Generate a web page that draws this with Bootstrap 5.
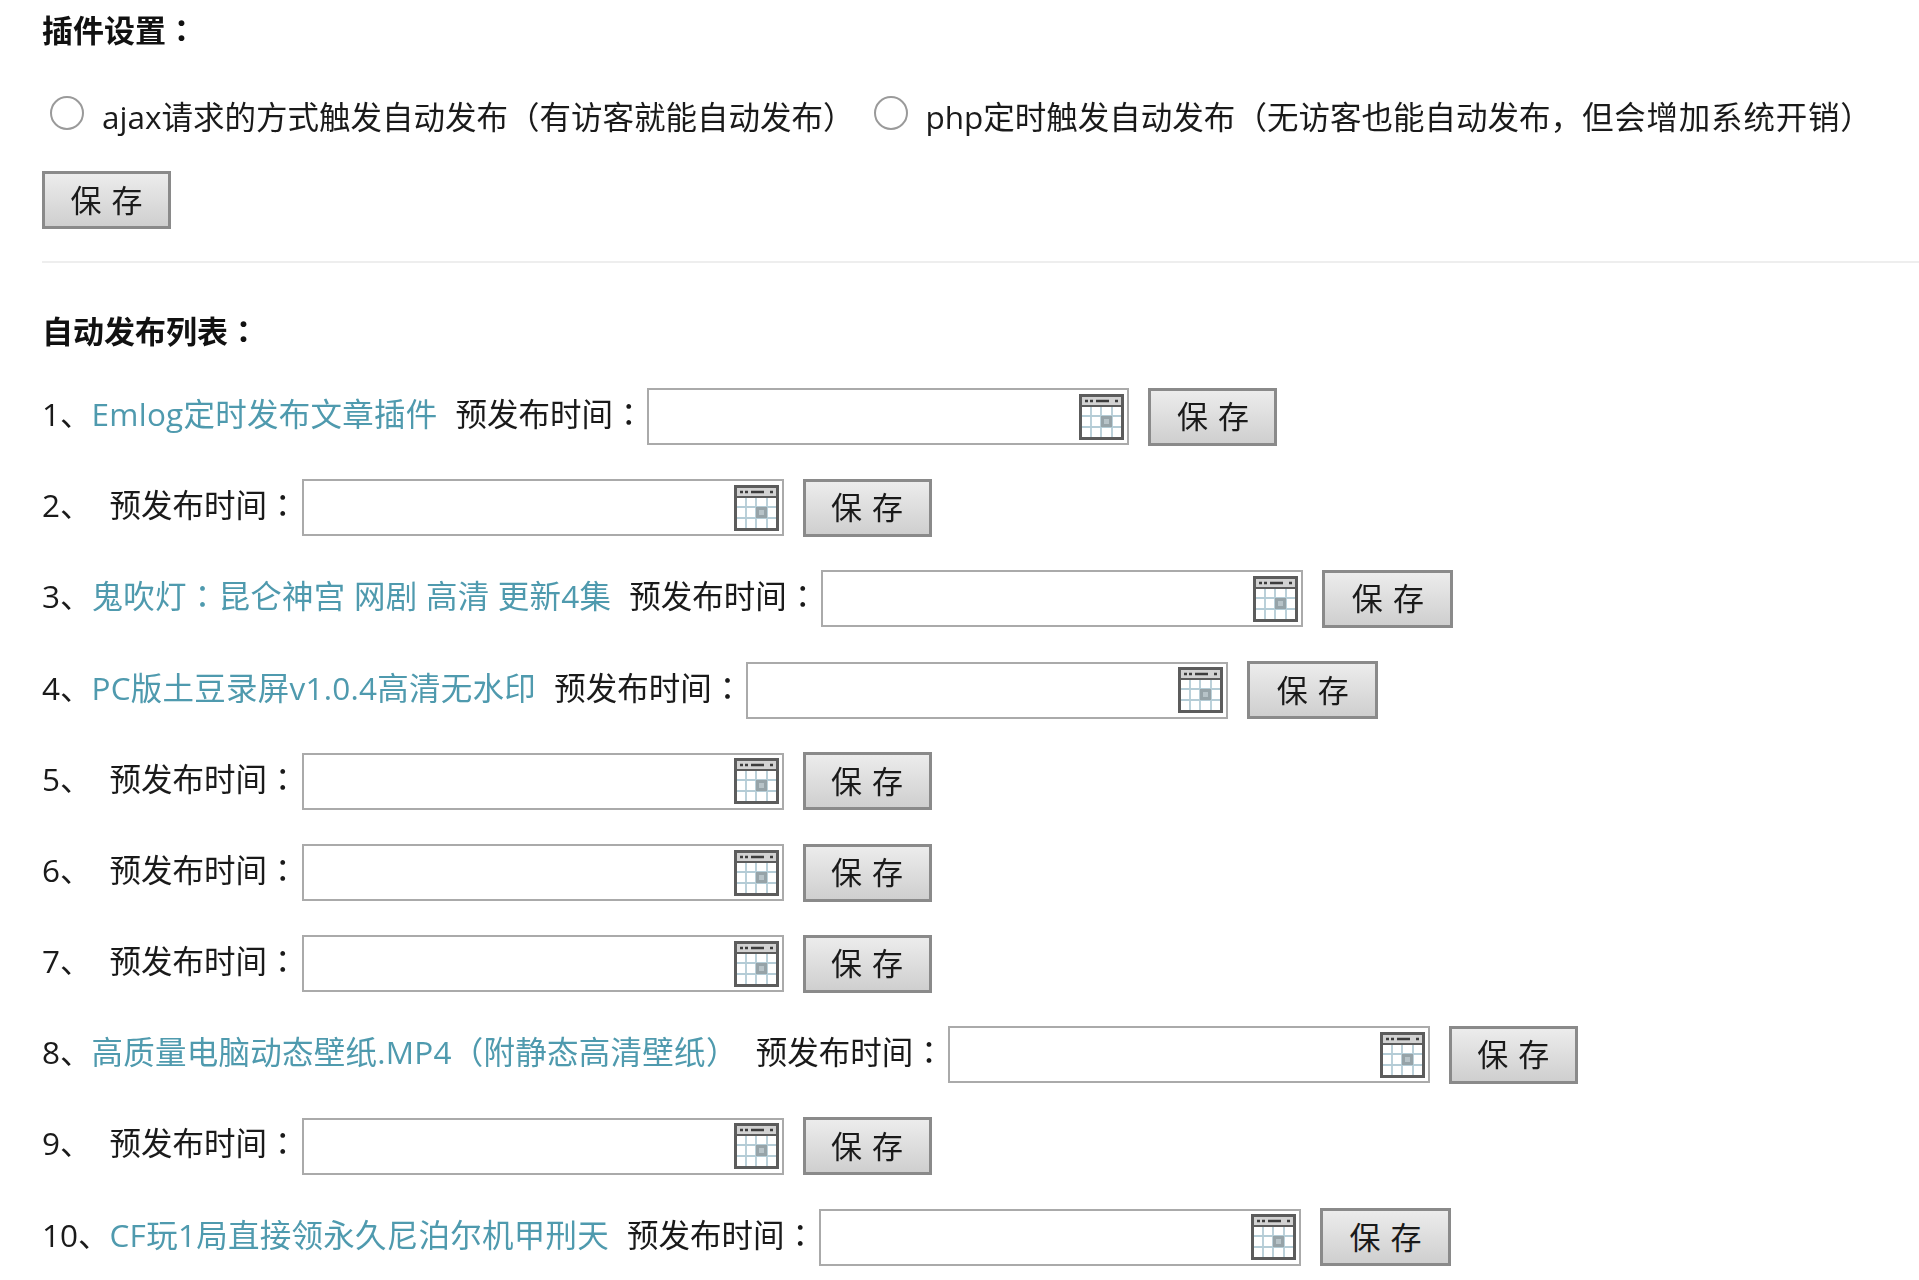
<!DOCTYPE html>
<html lang="zh-CN">
<head>
<meta charset="utf-8">
<title>插件设置</title>
<link rel="stylesheet" href="https://cdn.jsdelivr.net/npm/bootstrap@5.3.0/dist/css/bootstrap.min.css">
<style>
body{background:#fff;color:#1a1a1a;font-family:"Open Sans","Noto Sans CJK SC",sans-serif;font-size:31.5px;overflow:hidden}
.sheet{padding-left:42px;filter:blur(.6px)}
.pn{font-family:"Noto Sans CJK TC",sans-serif}
.sect-title{font-weight:700;font-size:31px;line-height:58px;height:62px;color:#111}
.sect-title.top{margin-bottom:3px}
.sect-title.list{margin-top:38px;margin-bottom:8px}
.radio-line{height:106px;white-space:nowrap}
.radio-line .form-check-input{width:34px;height:34px;margin:0;border:2px solid #9a9a9a;border-radius:50%;background-color:#fff;transform:translateY(-5px);flex:none}
.radio-line .opt-a{margin-left:8px}
.radio-line label{margin-left:18px;padding-bottom:3px}
.radio-line .opt-b{margin-left:19px}
.stretch-tail{letter-spacing:.8px}
.save-btn{width:129px;height:58px;padding:0;border:3px solid #8a8a8a;border-radius:0;background:linear-gradient(#ececec,#cfcfcf);color:#1a1a1a;font-size:31px;line-height:1;flex:none;word-spacing:2px}
.save-btn.wider{width:131px}
.rule{height:2px;background:#eee;margin-top:32px}
.pub-line{height:91.2px;white-space:nowrap}
.pub-line .txt{padding-bottom:7px}
.pub-num{display:inline-block}
.pub-line a{color:#4f9aae;text-decoration:none;letter-spacing:.25px}
.pub-when{margin-left:18px}
.date-box{width:482px;height:57px;border:2px solid #aaa;background:#fff;padding-right:3px;margin-left:3px;margin-right:19px;flex:none}
.date-box input{border:0;outline:0;background:transparent;flex:1 1 auto;min-width:0}
.date-box svg{width:45px;height:46px;flex:none}
</style>
</head>
<body>
<div class="sheet">
  <div class="sect-title top">插件设置<span class="pn" lang="zh-TW">：</span></div>
  <div class="radio-line d-flex align-items-center">
    <input class="form-check-input opt-a" type="radio" name="mode" id="m1">
    <label for="m1">ajax请求的方式触发自动发布<span class="pn" lang="zh-TW">（</span>有访客就能自动发布<span class="pn" lang="zh-TW">）</span></label>
    <input class="form-check-input opt-b" type="radio" name="mode" id="m2">
    <label for="m2">php定时触发自动发布<span class="pn" lang="zh-TW">（</span>无访客也能自动发布，<span class="stretch-tail">但会增加系统开销</span><span class="pn" lang="zh-TW">）</span></label>
  </div>
  <button class="btn save-btn" type="button">保 存</button>
  <div class="rule"></div>
  <div class="sect-title list">自动发布列表<span class="pn" lang="zh-TW">：</span></div>

  <svg width="0" height="0" class="d-block position-absolute">
    <symbol id="cal" viewBox="0 0 45 46">
      <rect x="1.5" y="1.5" width="42" height="43" fill="#fff" stroke="#5c5c5c" stroke-width="3"/>
      <rect x="3" y="3" width="39" height="8" fill="#d2d2d2"/>
      <path d="M6 7h3M11 7h3M17 7h13M36 7h3" stroke="#3c3c3c" stroke-width="2.4"/>
      <path d="M3 12h39" stroke="#5c5c5c" stroke-width="2"/>
      <path d="M3 22h39M3 33h39M12 13v30M22 13v30M33 13v30" stroke="#b4ccd6" stroke-width="1.8"/>
      <rect x="22" y="22" width="11" height="11" fill="#96a3a8"/>
      <rect x="25" y="25" width="5" height="5" fill="#b7c3c8"/>
    </symbol>
  </svg>

  <div class="pub-line d-flex align-items-center"><span class="txt"><span class="pub-num">1、</span><a href="#">Emlog定时发布文章插件</a><span class="pub-when">预发布时间<span class="pn" lang="zh-TW">：</span></span></span><div class="date-box d-flex align-items-center"><input type="text"><svg><use href="#cal"/></svg></div><button class="btn save-btn" type="button">保 存</button></div>
  <div class="pub-line d-flex align-items-center"><span class="txt"><span class="pub-num">2、</span><span class="pub-when">预发布时间<span class="pn" lang="zh-TW">：</span></span></span><div class="date-box d-flex align-items-center"><input type="text"><svg><use href="#cal"/></svg></div><button class="btn save-btn" type="button">保 存</button></div>
  <div class="pub-line d-flex align-items-center"><span class="txt"><span class="pub-num">3、</span><a href="#">鬼吹灯<span class="pn" lang="zh-TW">：</span>昆仑神宫 网剧 高清 更新4集</a><span class="pub-when">预发布时间<span class="pn" lang="zh-TW">：</span></span></span><div class="date-box d-flex align-items-center"><input type="text"><svg><use href="#cal"/></svg></div><button class="btn save-btn wider" type="button">保 存</button></div>
  <div class="pub-line d-flex align-items-center"><span class="txt"><span class="pub-num">4、</span><a href="#">PC版土豆录屏v1.0.4高清无水印</a><span class="pub-when">预发布时间<span class="pn" lang="zh-TW">：</span></span></span><div class="date-box d-flex align-items-center"><input type="text"><svg><use href="#cal"/></svg></div><button class="btn save-btn wider" type="button">保 存</button></div>
  <div class="pub-line d-flex align-items-center"><span class="txt"><span class="pub-num">5、</span><span class="pub-when">预发布时间<span class="pn" lang="zh-TW">：</span></span></span><div class="date-box d-flex align-items-center"><input type="text"><svg><use href="#cal"/></svg></div><button class="btn save-btn" type="button">保 存</button></div>
  <div class="pub-line d-flex align-items-center"><span class="txt"><span class="pub-num">6、</span><span class="pub-when">预发布时间<span class="pn" lang="zh-TW">：</span></span></span><div class="date-box d-flex align-items-center"><input type="text"><svg><use href="#cal"/></svg></div><button class="btn save-btn" type="button">保 存</button></div>
  <div class="pub-line d-flex align-items-center"><span class="txt"><span class="pub-num">7、</span><span class="pub-when">预发布时间<span class="pn" lang="zh-TW">：</span></span></span><div class="date-box d-flex align-items-center"><input type="text"><svg><use href="#cal"/></svg></div><button class="btn save-btn" type="button">保 存</button></div>
  <div class="pub-line d-flex align-items-center"><span class="txt"><span class="pub-num">8、</span><a href="#">高质量电脑动态壁纸.MP4<span class="pn" lang="zh-TW">（</span>附静态高清壁纸<span class="pn" lang="zh-TW">）</span></a><span class="pub-when">预发布时间<span class="pn" lang="zh-TW">：</span></span></span><div class="date-box d-flex align-items-center"><input type="text"><svg><use href="#cal"/></svg></div><button class="btn save-btn" type="button">保 存</button></div>
  <div class="pub-line d-flex align-items-center"><span class="txt"><span class="pub-num">9、</span><span class="pub-when">预发布时间<span class="pn" lang="zh-TW">：</span></span></span><div class="date-box d-flex align-items-center"><input type="text"><svg><use href="#cal"/></svg></div><button class="btn save-btn" type="button">保 存</button></div>
  <div class="pub-line d-flex align-items-center"><span class="txt"><span class="pub-num">10、</span><a href="#">CF玩1局直接领永久尼泊尔机甲刑天</a><span class="pub-when">预发布时间<span class="pn" lang="zh-TW">：</span></span></span><div class="date-box d-flex align-items-center"><input type="text"><svg><use href="#cal"/></svg></div><button class="btn save-btn wider" type="button">保 存</button></div>
</div>
<script src="https://cdn.jsdelivr.net/npm/bootstrap@5.3.0/dist/js/bootstrap.bundle.min.js"></script>
</body>
</html>
